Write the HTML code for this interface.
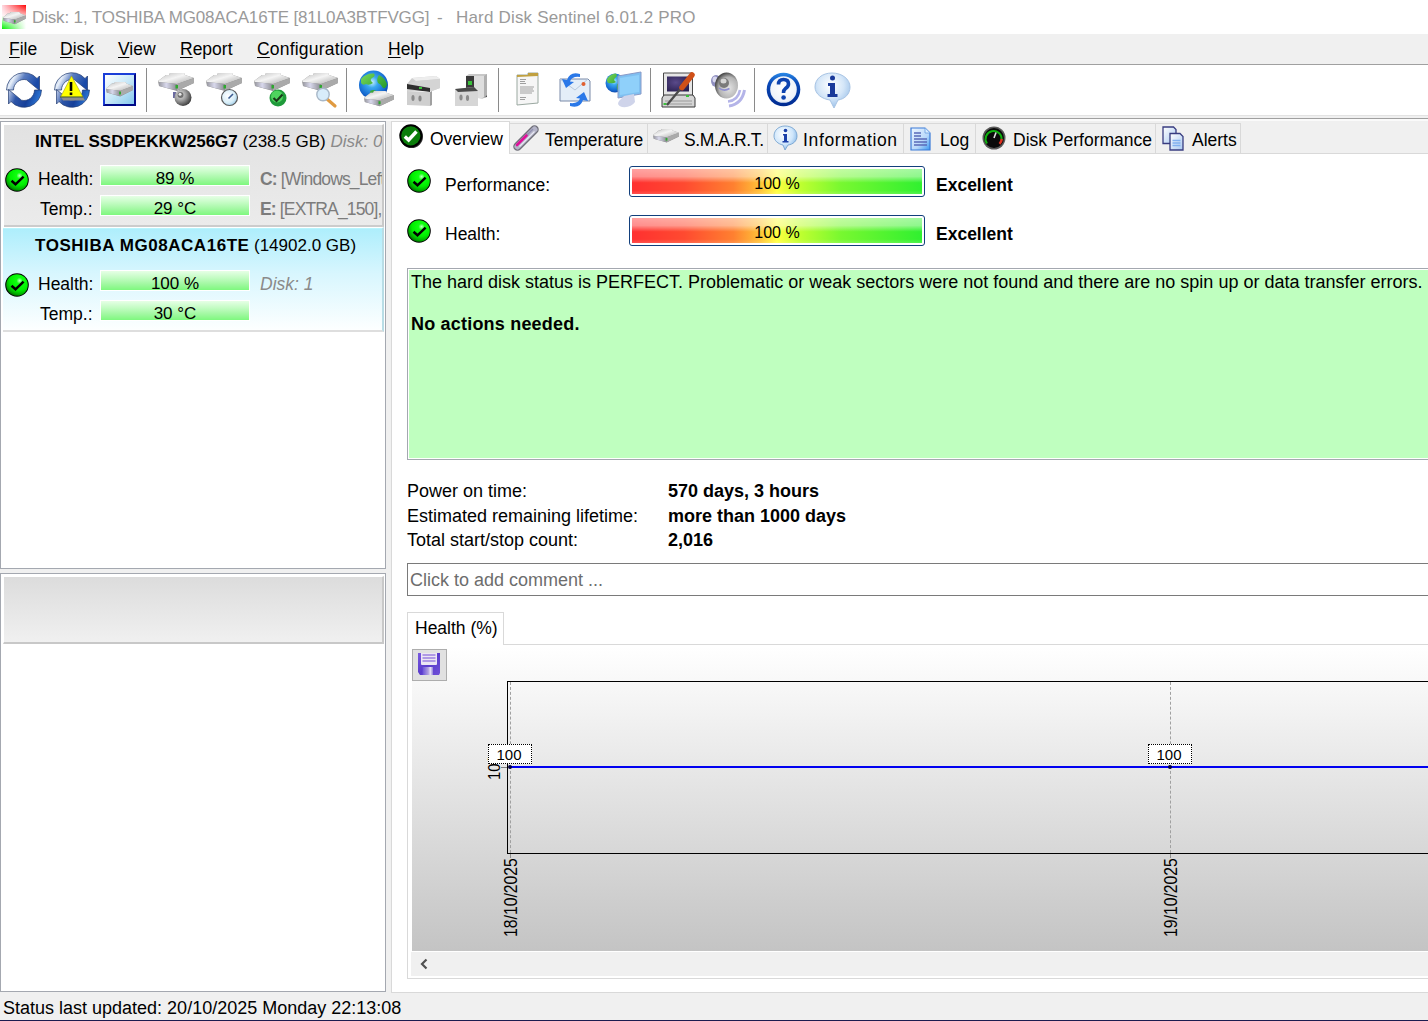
<!DOCTYPE html>
<html><head><meta charset="utf-8">
<style>
*{box-sizing:border-box}
body{margin:0;width:1428px;height:1021px;position:relative;overflow:hidden;background:#f0f0f0;font-family:"Liberation Sans",sans-serif;color:#000}
.a{position:absolute}
.t{position:absolute;white-space:pre;line-height:1}
svg{position:absolute;overflow:visible}
.menu u{text-decoration:underline;text-decoration-thickness:1px;text-underline-offset:2px}
.tab{position:absolute;top:123px;height:30px;background:#f0f0f0;border:1px solid #d9d9d9;border-bottom:none}
.gbar{position:absolute;width:150px;height:21px;background:linear-gradient(#e6ffe6,#c4fcc4 35%,#a0f8a0 70%,#7ef87e);border:1px solid #fff}
.gbar span{position:absolute;left:0;right:0;text-align:center;top:4px;font-size:17px;line-height:18px}
.pbar{position:absolute;left:629px;width:296px;height:31px;border:1px solid #123f7c;border-radius:3px;background:#fff;padding:2px}
.pbar .f{position:absolute;left:2px;top:2px;right:2px;bottom:2px;background:linear-gradient(90deg,#ff3030 0%,#ff4a30 18%,#ff8030 35%,#ffc038 44%,#ffff40 50%,#c0ff30 58%,#78f830 72%,#30f030 100%)}
.pbar .s{position:absolute;left:2px;top:2px;right:2px;bottom:2px;background:linear-gradient(rgba(255,255,255,.55),rgba(255,255,255,.45) 30%,rgba(255,255,255,0) 55%,rgba(255,255,255,0) 85%,rgba(255,255,255,.15))}
.pbar span{position:absolute;left:0;right:0;top:8px;text-align:center;font-size:16px;line-height:17px}
</style></head><body>

<!-- title bar -->
<div class="a" style="left:0;top:0;width:1428px;height:34px;background:#fff"></div>
<svg style="left:2px;top:5px" width="24" height="24" viewBox="0 0 24 24">
 <defs>
  <linearGradient id="tr" x1="0" y1="0" x2="1" y2="0"><stop offset="0" stop-color="#ffd8e0"/><stop offset="1" stop-color="#ff0000"/></linearGradient>
  <linearGradient id="tg" x1="0" y1="0" x2="1" y2="0"><stop offset="0" stop-color="#00f000"/><stop offset="1" stop-color="#ffffff"/></linearGradient>
  <linearGradient id="mv1" x1="0" y1="0" x2="0" y2="1"><stop offset="0" stop-color="#fff"/><stop offset=".6" stop-color="#000"/></linearGradient>
  <linearGradient id="mv2" x1="0" y1="0" x2="0" y2="1"><stop offset=".45" stop-color="#000"/><stop offset="1" stop-color="#fff"/></linearGradient>
  <mask id="m1"><rect width="24" height="24" fill="url(#mv1)"/></mask>
  <mask id="m2"><rect width="24" height="24" fill="url(#mv2)"/></mask>
 </defs>
 <rect width="24" height="24" fill="#fff"/>
 <rect width="24" height="24" fill="url(#tr)" mask="url(#m1)"/>
 <rect width="24" height="24" fill="url(#tg)" mask="url(#m2)"/>
 <g transform="translate(1,7) scale(.63,.68)"><use href="#disk"/></g>
</svg>
<div class="t" style="left:32px;top:9px;font-size:17px;color:#9a9a9a;letter-spacing:-0.15px">Disk: 1, TOSHIBA MG08ACA16TE [81L0A3BTFVGG]</div>
<div class="t" style="left:437px;top:9px;font-size:17px;color:#9a9a9a">-</div>
<div class="t" style="left:456px;top:9px;font-size:17px;color:#9a9a9a;letter-spacing:0.18px">Hard Disk Sentinel 6.01.2 PRO</div>

<!-- menu -->
<div class="a menu" style="left:0;top:34px;width:1428px;height:30px;background:#f0f0f0;font-size:17.5px">
 <div class="t" style="left:9px;top:7px"><u>F</u>ile</div>
 <div class="t" style="left:60px;top:7px"><u>D</u>isk</div>
 <div class="t" style="left:118px;top:7px"><u>V</u>iew</div>
 <div class="t" style="left:180px;top:7px"><u>R</u>eport</div>
 <div class="t" style="left:257px;top:7px;letter-spacing:0.2px"><u>C</u>onfiguration</div>
 <div class="t" style="left:388px;top:7px"><u>H</u>elp</div>
</div>
<div class="a" style="left:0;top:64px;width:1428px;height:1px;background:#a0a0a0"></div>

<!-- toolbar -->
<div class="a" style="left:0;top:65px;width:1428px;height:50px;background:#fff"></div>
<div class="a" style="left:0;top:115px;width:1428px;height:1px;background:#e3e3e3"></div>
<div class="a" style="left:0;top:118px;width:1428px;height:1px;background:#a0a0a0"></div>
<div class="a" style="left:0;top:119px;width:1428px;height:2px;background:#fafafa"></div>
<div id="toolbar">
 <svg width="0" height="0" style="left:0;top:0">
  <defs>
   <linearGradient id="rbu" x1="0" y1="0" x2="1" y2=".3"><stop offset="0" stop-color="#7890c0"/><stop offset=".28" stop-color="#e8f0fa"/><stop offset=".55" stop-color="#5a7cc0"/><stop offset="1" stop-color="#1a4aa8"/></linearGradient>
   <linearGradient id="rbl" x1="0" y1="0" x2="1" y2=".2"><stop offset="0" stop-color="#c4d0ea"/><stop offset=".3" stop-color="#2e56a8"/><stop offset=".65" stop-color="#163f98"/><stop offset="1" stop-color="#2a74d4"/></linearGradient>
   <g id="ring" stroke="#203a70" stroke-width=".7">
    <path d="M0.5 18 A17.5 17.5 0 0 1 31 6.5 L33.5 4 L33.5 18.5 L20.5 7.8 A10.5 10.5 0 0 0 7.5 18 Z" fill="url(#rbu)"/>
    <path d="M35.5 18 A17.5 17.5 0 0 1 5 29.5 L2.5 32 L2.5 17.5 L15.5 28.2 A10.5 10.5 0 0 0 28.5 18 Z" fill="url(#rbl)"/>
   </g>
   <linearGradient id="dtop" x1="0" y1="0" x2="1" y2="1"><stop offset="0" stop-color="#bdbdbd"/><stop offset=".45" stop-color="#f4f4f4"/><stop offset="1" stop-color="#a8a8a8"/></linearGradient>
   <linearGradient id="dfront" x1="0" y1="0" x2="1" y2="0"><stop offset="0" stop-color="#9a9aa2"/><stop offset=".4" stop-color="#d8d8ec"/><stop offset="1" stop-color="#8a8a90"/></linearGradient>
   <g id="disk">
    <path d="M0 8 L8 2 L11 2 L12 0 L26 0 L27 2 L36 5 L36 10 L19 18 L1 13 Z" fill="#8e8e8e"/>
    <path d="M0 8 L8 2 L11 2 L12 0 L26 0 L27 2 L36 5 L19 11 L1 9 Z" fill="url(#dtop)"/>
    <path d="M1 9 L19 11 L19 17.5 L1 13 Z" fill="url(#dfront)"/>
    <path d="M19 11 L36 5 L36 10 L19 17.5 Z" fill="#aaaaaa"/>
    <rect x="17.5" y="12" width="2.5" height="3.5" fill="#2ea82e"/>
   </g>
   <radialGradient id="gl" cx=".45" cy=".4" r=".65"><stop offset="0" stop-color="#c8f0ff"/><stop offset=".3" stop-color="#3aa8f0"/><stop offset=".75" stop-color="#1468d0"/><stop offset="1" stop-color="#0a3c9c"/></radialGradient>
   <linearGradient id="gg" x1="0" y1="0" x2="1" y2="1"><stop offset="0" stop-color="#7ad85a"/><stop offset="1" stop-color="#0e8a1e"/></linearGradient>
  </defs>
 </svg>
 <svg style="left:6px;top:72px" width="36" height="36" viewBox="0 0 36 36"><use href="#ring"/></svg>
 <svg style="left:54px;top:72px" width="36" height="36" viewBox="0 0 36 36"><use href="#ring"/>
  <path d="M17.5 4 L29 25 L6.5 25 Z" fill="#ffff00" stroke="#a0a020" stroke-width=".6"/>
  <path d="M7 25 L29 25 L31 28.5 L9 28.5Z" fill="#8e8e8e"/><path d="M6 25 H29" stroke="#2a4a2a" stroke-width=".8"/>
  <path d="M17 10 V19" stroke="#000" stroke-width="2.6"/><rect x="15.7" y="20.5" width="2.6" height="2.6" fill="#000"/>
 </svg>
 <div class="a" style="left:103px;top:73px;width:33px;height:33px;border:2px solid #1a3ed8;border-right-color:#000a88;border-bottom-color:#000a88;background:linear-gradient(135deg,#ffffff,#c8e8f8 50%,#86c8ec)"></div>
 <svg style="left:106px;top:82px" width="27" height="16" viewBox="0 0 36 20" preserveAspectRatio="none"><use href="#disk"/></svg>
 <div class="a" style="left:146px;top:68px;width:1px;height:44px;background:#8a8a8a"></div>
 <!-- disk + gear -->
 <svg style="left:158px;top:73px" width="36" height="36" viewBox="0 0 36 36"><use href="#disk"/>
  <defs><radialGradient id="gear" cx=".35" cy=".35" r=".7"><stop offset="0" stop-color="#e8e8e8"/><stop offset=".5" stop-color="#9a9a9a"/><stop offset="1" stop-color="#3a3a3a"/></radialGradient></defs><rect x="15" y="19" width="3" height="6" fill="#6a6aa0"/><circle cx="25" cy="24.5" r="8.5" fill="url(#gear)"/><circle cx="22.5" cy="22" r="3" fill="#707070"/><circle cx="22" cy="21.3" r="1.5" fill="#e8e8e8"/>
 </svg>
 <svg style="left:206px;top:73px" width="36" height="36" viewBox="0 0 36 36"><use href="#disk"/>
  <defs><radialGradient id="clk" cx=".4" cy=".4" r=".7"><stop offset="0" stop-color="#ffffff"/><stop offset=".6" stop-color="#d8eef8"/><stop offset="1" stop-color="#90c4e4"/></radialGradient></defs><circle cx="23.5" cy="24.5" r="8" fill="url(#clk)" stroke="#5a5a5a" stroke-width="1.2"/><path d="M22.5 25.5 L27 21" stroke="#3a5a90" stroke-width="1.6"/>
 </svg>
 <svg style="left:254px;top:73px" width="36" height="36" viewBox="0 0 36 36"><use href="#disk"/>
  <circle cx="24" cy="25" r="8.5" fill="#1f9a3a"/><circle cx="23" cy="23.5" r="6" fill="#4ed45e"/>
  <path d="M19.5 25 L22.5 28 L28.5 21.5" fill="none" stroke="#1a3a1a" stroke-width="2.2"/>
 </svg>
 <svg style="left:302px;top:73px" width="36" height="36" viewBox="0 0 36 36"><use href="#disk"/>
  <path d="M25 26 L33 33" stroke="#e09a40" stroke-width="3.2" stroke-linecap="round"/>
  <circle cx="21" cy="21.5" r="6.2" fill="#d8ecfa" stroke="#a8b8c8" stroke-width="1.4"/>
 </svg>
 <div class="a" style="left:346px;top:68px;width:1px;height:44px;background:#8a8a8a"></div>
 <!-- globe + disk -->
 <svg style="left:357px;top:72px" width="38" height="36" viewBox="0 0 38 36">
  <circle cx="16.5" cy="13" r="14.5" fill="url(#gl)"/>
  <path d="M4 7 Q9 1 17 1.5 Q19 4 15 6 Q12 8 16 11 Q12 14 9 12 Q6 14 4 11Z M22 3 Q28 6 30 12 Q29 17 26 16 Q24 12 21 11 Q19 7 22 3Z M13 19 Q18 16 21 21 Q19 25 16 26 Q13 23 13 19Z" fill="url(#gg)"/>
  <g transform="translate(7,19) scale(.83,.85)"><use href="#disk"/></g>
 </svg>
 <!-- enclosure -->
 <svg style="left:406px;top:75px" width="36" height="32" viewBox="0 0 36 32">
  <path d="M1 9 L6 3 L30 1 L34 4 L34 13 L26 16 L1 16Z" fill="#cfcfcf"/>
  <path d="M6 3 L30 1 L34 4 L10 6Z" fill="#ededed"/>
  <path d="M1 9 L10 6 L34 4 L34 13 L26 16 L1 16Z" fill="#d4d4d4"/>
  <path d="M1 9 L24 13 L24 17 L1 14Z" fill="#2e2e2e"/>
  <rect x="13" y="12" width="3" height="2" fill="#3ac03a"/>
  <path d="M1 16 L24 17 L24 31 L1 30Z" fill="#cfcfcf"/><path d="M24 17 L26 16 L26 30 L24 31Z" fill="#a0a0a0"/>
  <ellipse cx="7" cy="23" rx="1.6" ry="3" fill="#8a8a8a"/><ellipse cx="14" cy="23.5" rx="1.6" ry="3" fill="#8a8a8a"/>
 </svg>
 <!-- computer -->
 <svg style="left:454px;top:73px" width="36" height="34" viewBox="0 0 36 34">
  <path d="M12 3 L15 1 L33 1 L33 22 L30 25 L12 25Z" fill="#c8c8c8"/>
  <path d="M12 3 L30 3 L30 25 L12 25Z" fill="#dedede"/><path d="M30 3 L33 1 L33 22 L30 25Z" fill="#b0b0b0"/>
  <path d="M12 3 L20 3 L20 16 L12 16Z" fill="#3a3a3a"/><rect x="14" y="8" width="4" height="4" fill="#3ac03a"/>
  <path d="M1 16 L20 14 L24 18 L24 33 L1 33Z" fill="#d6d6d6"/><path d="M1 16 L20 14 L24 18 L4 19Z" fill="#4a4a4a"/>
  <path d="M30 25 L33 22 L33 24 L24 26Z" fill="#505050"/>
  <ellipse cx="7" cy="24.5" rx="1.6" ry="3" fill="#8a8a8a"/><ellipse cx="13.5" cy="25" rx="1.6" ry="3" fill="#8a8a8a"/>
 </svg>
 <div class="a" style="left:498px;top:68px;width:1px;height:44px;background:#8a8a8a"></div>
 <!-- document -->
 <svg style="left:516px;top:73px" width="23" height="33" viewBox="0 0 23 33">
  <path d="M1 2 L12 2 L12 0 L22 0 L22 30 L1 32Z" fill="#f6f6f6" stroke="#9aa8a0" stroke-width="1"/>
  <path d="M1 2 L12 2 L12 0 L22 0 L22 3 L1 4Z" fill="#c0a040"/>
  <path d="M4 6.5 H10 M4 8.5 H9 M4 10.5 H10 M4 14 H18 M4 16 H17 M4 18 H18 M4 20 H16 M4 24.5 H10 M4 26.5 H9" stroke="#a0a0a0" stroke-width="1"/>
 </svg>
 <!-- envelope arrows -->
 <svg style="left:557px;top:72px" width="36" height="36" viewBox="0 0 36 36">
  <path d="M3 7 L31 7 L33 9 L33 29 L3 29Z" fill="#e4eef8" stroke="#7a8aa8" stroke-width="1"/>
  <path d="M3 7 L18 18 L31 7" fill="none" stroke="#b8c8dc" stroke-width="1"/>
  <circle cx="26.5" cy="12" r="2" fill="#e06030"/>
  <path d="M23 2 Q13 -1 10 8 L5 7 L9 16 L17 10 L13 9.5 Q15 4 23 5Z" fill="#2a78e8"/>
  <path d="M13 34 Q23 37 26 28 L31 29 L27 20 L19 26 L23 26.5 Q21 32 13 31Z" fill="#2a78e8"/>
 </svg>
 <!-- globe monitor -->
 <svg style="left:605px;top:72px" width="38" height="36" viewBox="0 0 38 36">
  <circle cx="10" cy="11" r="9.5" fill="url(#gl)"/>
  <path d="M2 7 Q5 2 11 1.5 Q13 4 10 6 Q8 8 11 10 Q8 12 5 11 Q3 12 2 9Z M12 12 Q16 10 18 14 Q17 18 13 19 Q11 16 12 12Z" fill="url(#gg)"/>
  <path d="M13 4 L36 0 L36 22 L13 26Z" fill="#7fbff0" stroke="#8a9ac8" stroke-width="1"/>
  <path d="M15 6 L34 3 L34 20 L15 23Z" fill="#8fd0fa"/>
  <path d="M19 24 L29 22 L30 30 Q26 36 17 35 Q11 33 14 29Z" fill="#cfd4ea"/>
 </svg>
 <div class="a" style="left:650px;top:68px;width:1px;height:44px;background:#8a8a8a"></div>
 <!-- laptop screwdriver -->
 <svg style="left:662px;top:72px" width="36" height="36" viewBox="0 0 36 36">
  <defs><radialGradient id="scr" cx=".4" cy=".4" r=".7"><stop offset="0" stop-color="#5a4a8a"/><stop offset="1" stop-color="#2a2050"/></radialGradient></defs>
  <path d="M1.5 1 H30.5 V24 H1.5Z" fill="#e6e6e6" stroke="#4a4a4a" stroke-width="1"/>
  <path d="M5 4.5 H27 V19.5 H5Z" fill="url(#scr)"/>
  <path d="M0 26 L2 23 H31 L33 26 V35 H0Z" fill="#d4d4d4" stroke="#3a3a3a" stroke-width="1"/>
  <path d="M3 29 H30 M3 32 H30" stroke="#9a9a9a" stroke-width="1"/>
  <rect x="1.5" y="31" width="3" height="2" fill="#3ac03a"/><rect x="24" y="23" width="3" height="2" fill="#3ac03a"/>
  <path d="M5 33 L20 15" stroke="#4a4a4a" stroke-width="2.2"/>
  <path d="M20 15.5 L30 3" stroke="#d05018" stroke-width="5.5" stroke-linecap="round"/>
 </svg>
 <!-- speaker -->
 <svg style="left:710px;top:72px" width="36" height="36" viewBox="0 0 36 36">
  <defs><radialGradient id="spk" cx=".6" cy=".6" r=".6"><stop offset="0" stop-color="#e4e4e4"/><stop offset=".7" stop-color="#b4b4b4"/><stop offset="1" stop-color="#4e4e4e"/></radialGradient></defs>
  <path d="M19 34 Q32 32 34.5 18" fill="none" stroke="#b4b4e8" stroke-width="3"/>
  <path d="M18 29.5 Q28 28.5 30 18" fill="none" stroke="#b4b4e8" stroke-width="2.6"/>
  <ellipse cx="6" cy="9" rx="5" ry="6" fill="#8e8ec0"/><ellipse cx="5" cy="7.5" rx="2.5" ry="3" fill="#d8d8f0"/>
  <ellipse cx="16.5" cy="13.5" rx="11.5" ry="13" fill="url(#spk)"/>
  <circle cx="14" cy="11" r="5" fill="#7a7a7a"/><ellipse cx="13.5" cy="9" rx="3" ry="2.5" fill="#d6d6d6"/>
  <path d="M9 16 Q14 20 19.5 16.5" fill="none" stroke="#8e8ed0" stroke-width="1.6"/>
 </svg>
 <div class="a" style="left:754px;top:68px;width:1px;height:44px;background:#8a8a8a"></div>
 <!-- help -->
 <svg style="left:766px;top:72px" width="35" height="35" viewBox="0 0 35 35">
  <defs><linearGradient id="hr" x1="0" y1="0" x2="0" y2="1"><stop offset="0" stop-color="#2a8ae8"/><stop offset=".3" stop-color="#0b4ab8"/><stop offset="1" stop-color="#002a90"/></linearGradient>
  <radialGradient id="hw" cx=".5" cy=".45" r=".6"><stop offset="0" stop-color="#ffffff"/><stop offset=".8" stop-color="#f0f4fa"/><stop offset="1" stop-color="#c8d8f0"/></radialGradient></defs>
  <circle cx="17.5" cy="17.5" r="16.8" fill="url(#hr)"/>
  <circle cx="17.5" cy="17.5" r="13.3" fill="url(#hw)"/>
  <path d="M12.5 12.5 Q12.5 7.5 17.5 7.5 Q22.5 7.5 22.5 12 Q22.5 14.5 19.5 16.5 Q17.5 18 17.5 21" fill="none" stroke="#0e44b0" stroke-width="3.6"/>
  <circle cx="17.6" cy="25.5" r="2.3" fill="#0e44b0"/>
 </svg>
 <!-- info -->
 <svg style="left:814px;top:72px" width="37" height="37" viewBox="0 0 37 37">
  <defs><radialGradient id="ib" cx=".45" cy=".35" r=".75"><stop offset="0" stop-color="#ffffff"/><stop offset=".5" stop-color="#d4e6f8"/><stop offset="1" stop-color="#88b4e4"/></radialGradient></defs>
  <path d="M18 1 C28 1 36 7 36 15 C36 22 31 27 24 28 L20 36 L16 28 C8 27 1 22 1 15 C1 7 8 1 18 1Z" fill="url(#ib)" stroke="#a8c4e4" stroke-width="1"/>
  <circle cx="18.5" cy="6" r="2.5" fill="#1a3a9a"/>
  <path d="M14 11 H21 V22 H23.5 V25 H13.5 V22 H16 V14 H14Z" fill="#1a3a9a"/>
 </svg>
</div>

<!-- left panel -->
<div class="a" style="left:0;top:121px;width:386px;height:448px;background:#fff;border:1px solid #a4a8b0"></div>
<div class="a" style="left:0;top:573px;width:386px;height:419px;background:#fff;border:1px solid #a4a8b0"></div>
<div id="left" style="font-size:17.5px">
 <!-- item 1 -->
 <div class="a" style="left:4px;top:124px;width:380px;height:103px;background:linear-gradient(#e2e2e2,#ebebeb);border-right:2px solid #c8c8c8;border-bottom:2px solid #cccccc;border-top:1px solid #fff"></div>
 <div class="a" style="left:5px;top:125px;width:377px;height:100px;overflow:hidden">
  <div class="t" style="left:30px;top:8px;font-size:17px"><b>INTEL SSDPEKKW256G7</b> (238.5 GB) <i style="color:#8a8a8a">Disk: 0</i></div>
  <div class="t" style="left:255px;top:46px;color:#7c7c7c;letter-spacing:-0.85px"><b>C:</b> [Windows_Left]</div>
  <div class="t" style="left:255px;top:76px;color:#7c7c7c;letter-spacing:-0.85px"><b>E:</b> [EXTRA_150],</div>
 </div>
 <svg style="left:5px;top:168px" width="24" height="24" viewBox="0 0 24 24"><use href="#chk"/></svg>
 <div class="t" style="left:38px;top:171px">Health:</div>
 <div class="t" style="left:40px;top:201px">Temp.:</div>
 <div class="gbar" style="left:100px;top:165px"><span>89 %</span></div>
 <div class="gbar" style="left:100px;top:195px"><span>29 °C</span></div>
 <!-- item 2 -->
 <div class="a" style="left:3px;top:227px;width:381px;height:105px;background:linear-gradient(#c4fcff,#aeeefc 1px,#d8f6fe 45%,#fdffff);border-top:1px solid #fff;border-bottom:2px solid #dedede;border-right:2px solid #b8dde6"></div>
 <div class="t" style="left:35px;top:237px;font-size:17px;letter-spacing:0.55px"><b>TOSHIBA MG08ACA16TE</b></div>
 <div class="t" style="left:254px;top:237px;font-size:17px">(14902.0 GB)</div>
 <svg style="left:5px;top:273px" width="24" height="24" viewBox="0 0 24 24"><use href="#chk"/></svg>
 <div class="t" style="left:38px;top:276px">Health:</div>
 <div class="t" style="left:40px;top:306px">Temp.:</div>
 <div class="gbar" style="left:100px;top:270px"><span>100 %</span></div>
 <div class="gbar" style="left:100px;top:300px"><span>30 °C</span></div>
 <div class="t" style="left:260px;top:276px;color:#8a8a8a;font-style:italic">Disk: 1</div>
 <!-- lower gray box -->
 <div class="a" style="left:3px;top:576px;width:381px;height:68px;background:linear-gradient(#dcdcdc,#f0f0f0);border-left:1px solid #fff;border-top:1px solid #fff;border-right:2px solid #c8c8c8;border-bottom:2px solid #c8c8c8"></div>
</div>

<!-- right panel -->
<div class="a" style="left:391px;top:121px;width:1037px;height:872px;background:#fff;border-left:1px solid #d9d9d9;border-bottom:1px solid #d9d9d9"></div>
<div class="a" style="left:392px;top:121px;width:1036px;height:32px;background:#f0f0f0"></div>
<div class="a" style="left:392px;top:153px;width:1036px;height:1px;background:#d9d9d9"></div>
<div id="tabs" style="font-size:17.5px">
 <div class="tab" style="left:509px;width:139px"></div>
 <div class="tab" style="left:647px;width:121px"></div>
 <div class="tab" style="left:767px;width:137px"></div>
 <div class="tab" style="left:903px;width:73px"></div>
 <div class="tab" style="left:975px;width:181px"></div>
 <div class="tab" style="left:1155px;width:86px"></div>
 <div class="a" style="left:391px;top:121px;width:119px;height:33px;background:#fff;border:1px solid #d9d9d9;border-bottom:none"></div>
 <!-- overview icon -->
 <svg style="left:399px;top:124px" width="25" height="25" viewBox="0 0 25 25">
  <circle cx="12.5" cy="12.5" r="11.5" fill="#303030"/>
  <circle cx="11.8" cy="11.8" r="11.5" fill="#000"/>
  <circle cx="11.8" cy="11.8" r="9.6" fill="#0a7d0a"/>
  <path d="M5.8 12.5 L9.6 16 L17.5 7.5" fill="none" stroke="#fff" stroke-width="3.4"/>
 </svg>
 <div class="t" style="left:430px;top:131px">Overview</div>
 <!-- temperature icon -->
 <svg style="left:513px;top:125px" width="26" height="26" viewBox="0 0 26 26">
  <path d="M4.5 21.5 L21.5 4.5" stroke="#6e6e78" stroke-width="8.5" stroke-linecap="round"/>
  <path d="M4.5 21.5 L21.5 4.5" stroke="#b4b4c8" stroke-width="6" stroke-linecap="round"/>
  <path d="M6.5 21.5 L21.5 6.5" stroke="#e8e8f4" stroke-width="1.2"/>
  <path d="M4 20 L14 10" stroke="#e0109a" stroke-width="2.6" stroke-linecap="round"/>
  <path d="M14 10 L20 4" stroke="#9090b0" stroke-width="1.5"/>
 </svg>
 <div class="t" style="left:545px;top:132px">Temperature</div>
 <!-- smart icon -->
 <svg style="left:653px;top:129px" width="26" height="15" viewBox="0 0 36 20" preserveAspectRatio="none"><use href="#disk"/></svg>
 <div class="t" style="left:684px;top:132px;letter-spacing:-0.4px">S.M.A.R.T.</div>
 <!-- info icon -->
 <svg style="left:773px;top:125px" width="26" height="26" viewBox="0 0 26 26">
  <defs><radialGradient id="ig" cx=".4" cy=".35" r=".7"><stop offset="0" stop-color="#fff"/><stop offset=".6" stop-color="#cfe6fb"/><stop offset="1" stop-color="#7fb2e6"/></radialGradient></defs>
  <path d="M12 1 C19 1 24 5 24 11 C24 16 20 19.5 15 20 L12 25 L10 20 C5 19 1 15.5 1 11 C1 5 6 1 12 1Z" fill="url(#ig)" stroke="#6c9ccc" stroke-width=".8"/>
  <circle cx="12.5" cy="5.5" r="1.8" fill="#1a3fa8"/>
  <path d="M10 9 H14 V16 H15.5 V17.5 H9.5 V16 H11 V10.5 H10Z" fill="#1a3fa8"/>
 </svg>
 <div class="t" style="left:803px;top:132px;letter-spacing:0.65px">Information</div>
 <!-- log icon -->
 <svg style="left:910px;top:127px" width="23" height="24" viewBox="0 0 23 24">
  <defs><linearGradient id="lg" x1="0" y1="0" x2="1" y2="1"><stop offset="0" stop-color="#eef6ff"/><stop offset=".6" stop-color="#b8d8fa"/><stop offset="1" stop-color="#3a98f0"/></linearGradient></defs>
  <path d="M1 1 H15 L20 6 V23 H1Z" fill="url(#lg)" stroke="#3a7ad8" stroke-width="1.2"/>
  <path d="M15 1 V6 H20" fill="#d8ecff" stroke="#6aa0e0" stroke-width=".8"/>
  <path d="M4 6 H11 M4 9 H11 M4 12 H17 M4 15 H17 M4 18 H17" stroke="#5a6ab8" stroke-width="1.3"/>
 </svg>
 <div class="t" style="left:940px;top:132px">Log</div>
 <!-- disk perf icon -->
 <svg style="left:982px;top:126px" width="24" height="24" viewBox="0 0 24 24">
  <circle cx="12" cy="12" r="11.5" fill="#5a5a5a"/>
  <circle cx="12" cy="12" r="10" fill="#0a0a0a"/>
  <path d="M5 17.5 A8 8 0 1 1 19.5 14" fill="none" stroke="#10b010" stroke-width="2"/>
  <path d="M19.8 13 A8 8 0 0 1 17.5 17.8" fill="none" stroke="#e03020" stroke-width="2.4"/>
  <path d="M12 12 L14 6.5" stroke="#e0e0e0" stroke-width="1.6"/>
 </svg>
 <div class="t" style="left:1013px;top:132px">Disk Performance</div>
 <!-- alerts icon -->
 <svg style="left:1162px;top:126px" width="24" height="25" viewBox="0 0 24 25">
  <defs><linearGradient id="ag" x1="0" y1="0" x2="1" y2="1"><stop offset="0" stop-color="#ffffff"/><stop offset="1" stop-color="#a8c8f0"/></linearGradient></defs>
  <path d="M1 1 H11.5 L14 3.5 V17.5 H1Z" fill="url(#ag)" stroke="#383c80" stroke-width="1.3"/>
  <path d="M8 7.5 H18 L21 10.5 V24 H8Z" fill="url(#ag)" stroke="#383c80" stroke-width="1.3"/>
  <path d="M10.5 14.5 H18.5 M10.5 17 H18.5 M10.5 19.5 H18.5" stroke="#80b0f0" stroke-width="1.6"/>
 </svg>
 <div class="t" style="left:1192px;top:132px">Alerts</div>
</div>
<div id="overview" style="font-size:17.5px">
 <svg style="left:407px;top:169px" width="24" height="24" viewBox="0 0 24 24"><use href="#chk"/></svg>
 <svg style="left:407px;top:219px" width="24" height="24" viewBox="0 0 24 24"><use href="#chk"/></svg>
 <div class="t" style="left:445px;top:177px">Performance:</div>
 <div class="t" style="left:445px;top:226px">Health:</div>
 <div class="pbar" style="top:166px"><div class="f"></div><div class="s"></div><span>100 %</span></div>
 <div class="pbar" style="top:215px"><div class="f"></div><div class="s"></div><span>100 %</span></div>
 <div class="t" style="left:936px;top:177px;font-weight:bold">Excellent</div>
 <div class="t" style="left:936px;top:226px;font-weight:bold">Excellent</div>
 <div class="a" style="left:407px;top:268px;width:1030px;height:192px;background:#bfffbf;border:1px solid #a4a8b0;box-shadow:inset 0 0 0 1px #fff"></div>
 <div class="t" style="left:411px;top:273px;font-size:18px">The hard disk status is PERFECT. Problematic or weak sectors were not found and there are no spin up or data transfer errors.</div>
 <div class="t" style="left:411px;top:315px;font-size:18px;font-weight:bold;letter-spacing:0.2px">No actions needed.</div>
 <div class="t" style="left:407px;top:482px;font-size:18px">Power on time:</div>
 <div class="t" style="left:407px;top:507px;font-size:18px">Estimated remaining lifetime:</div>
 <div class="t" style="left:407px;top:531px;font-size:18px">Total start/stop count:</div>
 <div class="t" style="left:668px;top:482px;font-size:18px;font-weight:bold">570 days, 3 hours</div>
 <div class="t" style="left:668px;top:507px;font-size:18px;font-weight:bold">more than 1000 days</div>
 <div class="t" style="left:668px;top:531px;font-size:18px;font-weight:bold">2,016</div>
 <div class="a" style="left:407px;top:563px;width:1030px;height:33px;background:#fff;border:1px solid #7a7a7a"></div>
 <div class="t" style="left:410px;top:571px;font-size:18px;color:#6d6d6d">Click to add comment ...</div>
</div>
<svg width="0" height="0" style="position:absolute">
 <defs>
  <radialGradient id="cg" cx=".62" cy=".3" r=".8"><stop offset="0" stop-color="#c0ffc0"/><stop offset=".18" stop-color="#10ff10"/><stop offset=".55" stop-color="#00f000"/><stop offset=".8" stop-color="#00a800"/><stop offset="1" stop-color="#003a00"/></radialGradient>
  <g id="chk">
   <circle cx="12" cy="12" r="11.8" fill="#000"/>
   <circle cx="12" cy="12" r="10.8" fill="url(#cg)"/>
   <path d="M6.5 12.8 L10.5 16.3 L18.6 8.6" fill="none" stroke="#000" stroke-width="2.5"/>
  </g>
 </defs>
</svg>
<div id="chart">
 <div class="a" style="left:407px;top:644px;width:1030px;height:335px;background:#fff;border:1px solid #d9d9d9"></div>
 <div class="a" style="left:407px;top:612px;width:97px;height:33px;background:#fff;border:1px solid #d9d9d9;border-bottom:none"></div>
 <div class="t" style="left:415px;top:620px;font-size:17.5px">Health (%)</div>
 <div class="a" style="left:412px;top:647px;width:1016px;height:304px;background:linear-gradient(#ffffff,#c4c4c4)"></div>
 <!-- save button -->
 <div class="a" style="left:412px;top:649px;width:35px;height:32px;background:#e1e1e1;border:1px solid #adadad"></div>
 <svg style="left:418px;top:653px" width="22" height="22" viewBox="0 0 22 22">
  <defs><linearGradient id="fl" x1="0" y1="0" x2="1" y2="1"><stop offset="0" stop-color="#7a5ae0"/><stop offset=".5" stop-color="#5a3ccc"/><stop offset="1" stop-color="#7050d8"/></linearGradient>
  <linearGradient id="fs" x1="0" y1="0" x2="1" y2="0"><stop offset="0" stop-color="#6a50d8"/><stop offset=".55" stop-color="#b0a0e0"/><stop offset=".75" stop-color="#e8e0f8"/><stop offset="1" stop-color="#9080d8"/></linearGradient></defs>
  <path d="M0 0 H22 V20 L21 22 H2 L0 19Z" fill="url(#fl)"/>
  <path d="M3 0 H19 V11 Q19 12 18 12 H4 Q3 12 3 11Z" fill="#ece6f4"/>
  <path d="M4.5 2 H17.5 M4.5 5 H17.5 M4.5 8 H17.5" stroke="#9a80e0" stroke-width="1.5"/>
  <path d="M4.5 14 H15 V22 H4.5Z" fill="url(#fs)"/>
 </svg>
 <!-- frame -->
 <div class="a" style="left:507px;top:681px;width:930px;height:173px;border:1px solid #000"></div>
 <div class="a" style="left:510px;top:682px;width:0;height:171px;border-left:1px dashed #a0a0a0"></div>
 <div class="a" style="left:1170px;top:682px;width:0;height:171px;border-left:1px dashed #a0a0a0"></div>
 <div class="a" style="left:510px;top:854px;width:1px;height:4px;background:#909090"></div>
 <div class="a" style="left:1170px;top:854px;width:1px;height:4px;background:#909090"></div>
 <div class="a" style="left:510px;top:766px;width:918px;height:2px;background:#0000f0"></div>
 <div class="a" style="left:508px;top:765px;width:4px;height:4px;background:#000040;border-radius:2px"></div>
 <div class="a" style="left:1168px;top:765px;width:4px;height:4px;background:#000040;border-radius:2px"></div>
 <div class="a" style="left:501px;top:767px;width:6px;height:1px;background:#808080"></div>
 <div class="t" style="left:485.5px;top:779.5px;font-size:16.5px;transform-origin:0 0;transform:rotate(-90deg) scaleX(.9)">100</div>
 <div class="a" style="left:488px;top:744px;width:44px;height:20px;background:#fff;border:1px dotted #000"></div>
 <div class="t" style="left:496.5px;top:747px;font-size:15px">100</div>
 <div class="a" style="left:1148px;top:744px;width:44px;height:20px;background:#fff;border:1px dotted #000"></div>
 <div class="t" style="left:1156.5px;top:747px;font-size:15px">100</div>
 <div class="t" style="left:503.2px;top:936.5px;font-size:17.5px;transform-origin:0 0;transform:rotate(-90deg) scaleX(.9)">18/10/2025</div>
 <div class="t" style="left:1163.2px;top:936.5px;font-size:17.5px;transform-origin:0 0;transform:rotate(-90deg) scaleX(.9)">19/10/2025</div>
 <!-- scrollbar -->
 <div class="a" style="left:411px;top:952px;width:1017px;height:24px;background:#f0f0f0"></div>
 <svg style="left:419px;top:958px" width="10" height="12" viewBox="0 0 10 12"><path d="M7.5 1.5 L3 6 L7.5 10.5" fill="none" stroke="#505050" stroke-width="2.2"/></svg>
</div>

<!-- status bar -->
<div class="t" style="left:3px;top:999px;font-size:18px">Status last updated: 20/10/2025 Monday 22:13:08</div>
<div class="a" style="left:0;top:1020px;width:1428px;height:1px;background:#1c1c50"></div>
</body></html>
